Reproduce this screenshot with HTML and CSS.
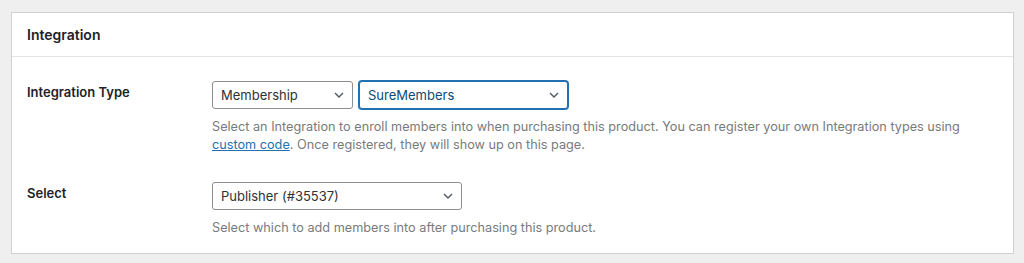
FILE: index.html
```html
<!DOCTYPE html>
<html>
<head>
<meta charset="utf-8">
<link rel="stylesheet" href="styles.css">
</head>
<body>
<div class="card">
  <div class="card-header">Integration</div>
  <div class="card-body">
    <div class="row">
      <div class="label">Integration Type</div>
      <div class="field">
        <div class="controls">
          <div class="select w-type"><span>Membership</span><svg class="chev" width="10" height="6" viewBox="0 0 10 6"><path d="M1 1 L5 5 L9 1" fill="none" stroke="#50575e" stroke-width="1.4"/></svg></div>
          <div class="select w-int focused"><span>SureMembers</span><svg class="chev" width="10" height="6" viewBox="0 0 10 6"><path d="M1 1 L5 5 L9 1" fill="none" stroke="#50575e" stroke-width="1.4"/></svg></div>
        </div>
        <p class="desc">Select an Integration to enroll members into when purchasing this product. You can register your own Integration types using <a href="#">custom code</a>. Once registered, they will show up on this page.</p>
      </div>
    </div>
    <div class="row">
      <div class="label">Select</div>
      <div class="field">
        <div class="controls">
          <div class="select w-pub"><span>Publisher (#35537)</span><svg class="chev" width="10" height="6" viewBox="0 0 10 6"><path d="M1 1 L5 5 L9 1" fill="none" stroke="#50575e" stroke-width="1.4"/></svg></div>
        </div>
        <p class="desc">Select which to add members into after purchasing this product.</p>
      </div>
    </div>
  </div>
</div>
</body>
</html>
```
FILE: styles.css
```css
* { box-sizing: border-box; }
html, body { margin: 0; padding: 0; }
body {
  background: #efefef;
  font-family: Inter, "Liberation Sans", Arial, sans-serif;
  color: #1d2327;
  padding: 12px 10px 10px 11px;
}
.card {
  background: #fff;
  border: 1px solid #cfd0d2;
}
.card-header {
  height: 44px;
  line-height: 43px;
  padding: 0 15px;
  font-size: 14px;
  font-weight: 600;
  color: #1d2327;
  border-bottom: 1px solid #e3e4e6;
}
.card-body {
  padding: 24px 15px 16px;
  display: flex;
  flex-direction: column;
  gap: 28px;
}
.row {
  display: grid;
  grid-template-columns: 185px 1fr;
}
.label {
  font-size: 13px;
  font-weight: 600;
  line-height: 20px;
  padding-top: 1px;
}
.controls {
  display: flex;
  gap: 6px;
}
.select {
  height: 28px;
  border: 1px solid #8c8f94;
  border-radius: 3px;
  display: flex;
  align-items: center;
  justify-content: space-between;
  padding: 0 8px 0 8px;
  font-size: 13px;
  color: #2c3338;
  background: #fff;
}
.select.focused {
  border-color: #2271b1;
  box-shadow: 0 0 0 1px #2271b1;
  color: #0a4b78;
}
.w-type { width: 141px; }
.w-int { width: 209px; }
.w-pub { width: 250px; }
.desc {
  margin: 9px 0 0;
  font-size: 12.7px;
  line-height: 18px;
  color: #787b7e;
}
.desc a {
  color: #2271b1;
  text-decoration: underline;
}
```
